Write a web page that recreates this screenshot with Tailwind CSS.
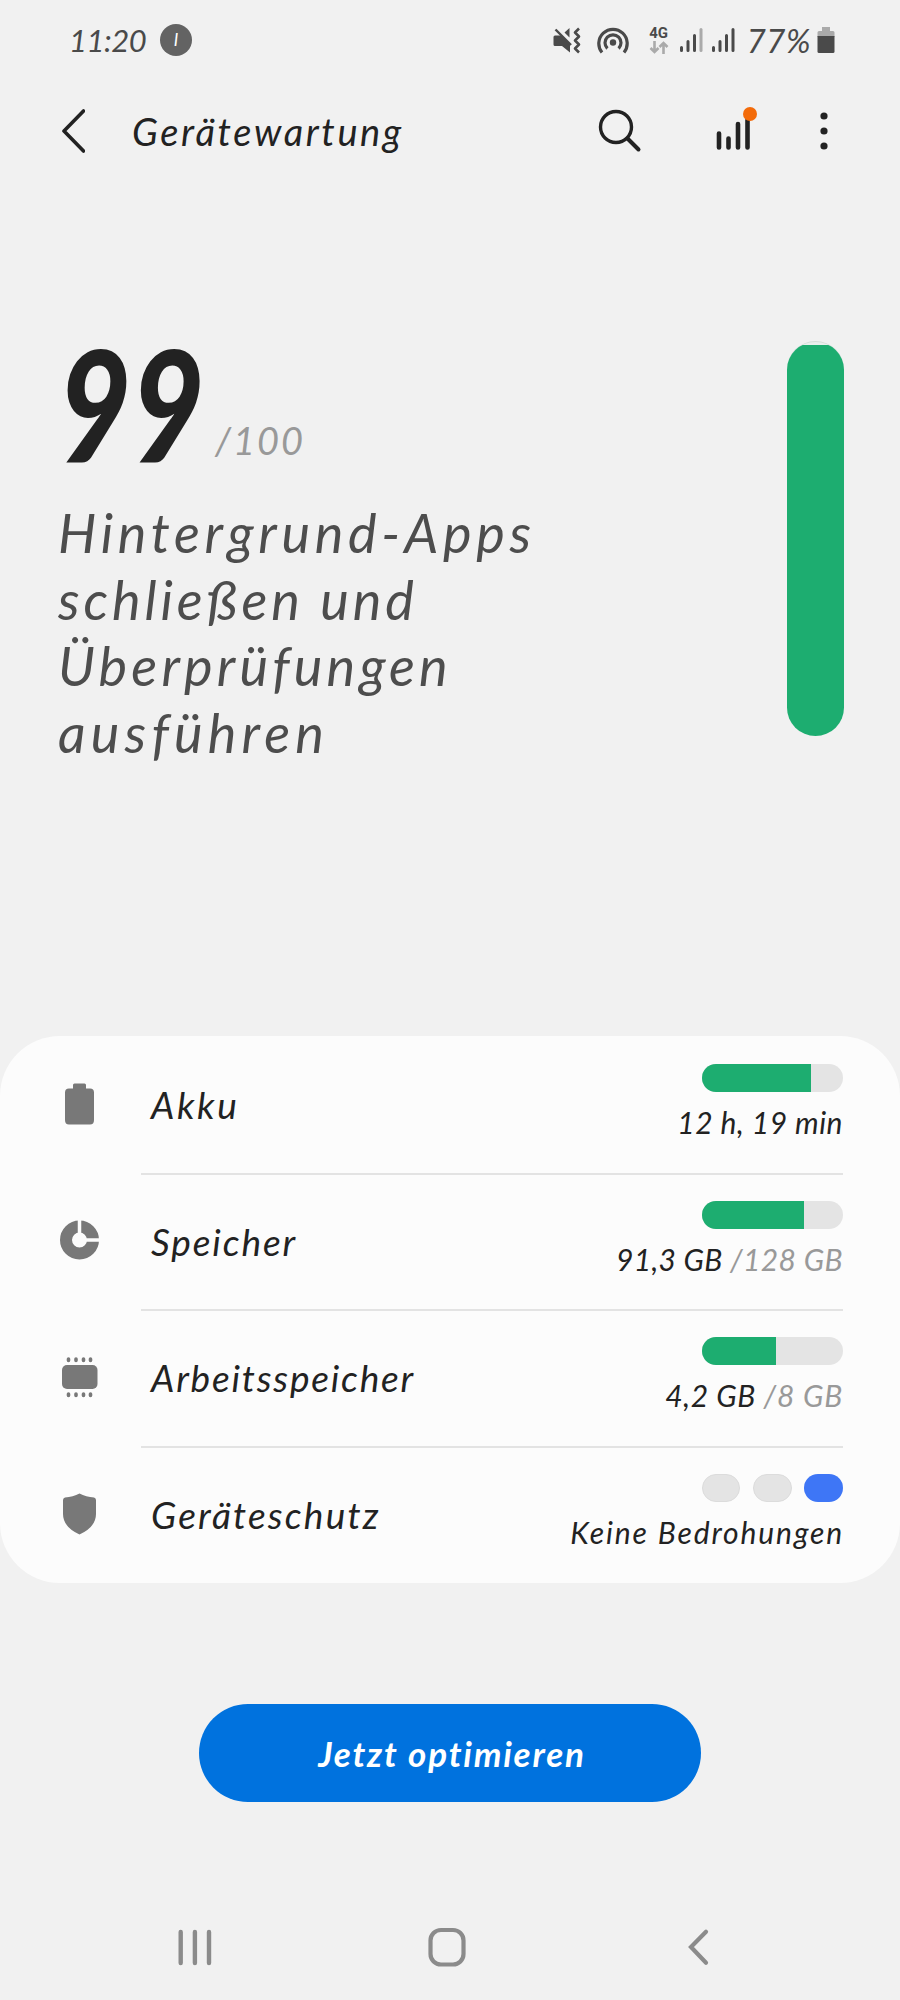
<!DOCTYPE html>
<html lang="de">
<head>
<meta charset="utf-8">
<title>Gerätewartung</title>
<script src="https://cdn.jsdelivr.net/npm/@tailwindcss/browser@4"></script>
</head>
<body class="bg-[#f1f1f1]">
<div class="flex h-[2000px] w-[900px] flex-col overflow-hidden bg-[#f1f1f1] font-[Lato,sans-serif] text-[#222] italic whitespace-nowrap">

  <!-- Status bar -->
  <header class="flex h-20 shrink-0 items-center pr-[65px] pl-[69px] text-[#4a4a4a]">
    <span class="text-[31px] leading-none tracking-[-0.5px]">11:20</span>
    <span class="ml-[14px] flex size-8 items-center justify-center rounded-full bg-[#636363] text-[17px] text-white">I</span>
    <div class="ml-auto flex items-center">
      <svg class="h-7 w-7" viewBox="0 0 28 28" fill="#4a4a4a"><path d="M2 9.500H8.500L17 17.500V26.500L9 20H2Q.500 20 .500 18.500V11Q.500 9.500 2 9.500zM11.500 6.500L16.500 2V11.500z"/><path d="M2.500 3.500L18 19" stroke="#4a4a4a" stroke-width="2.400" fill="none"/><path d="M26 2.500l-4 4 4 4-4 4 4 4-4 4 4 4" stroke="#4a4a4a" stroke-width="2.600" stroke-linejoin="round" fill="none"/></svg>
      <svg class="ml-4 h-7 w-8" viewBox="0 0 32 28" fill="none" stroke="#4a4a4a" stroke-width="3.200"><path d="M5 26.500A14.200 14.200 0 1 1 27 26.500"/><path d="M10.400 22.500A8 8 0 1 1 21.600 22.500"/><circle cx="16" cy="16.500" r="3.200" fill="#4a4a4a" stroke="none"/></svg>
      <span class="ml-5 flex w-5 flex-col items-center font-[Roboto,sans-serif] text-[15px] leading-[13px] font-bold not-italic">4G
        <svg class="mt-px h-[13px] w-5" viewBox="0 0 20 13" fill="none" stroke="#aaa" stroke-width="2.600"><path d="M5.500 0v11M1.500 7l4 4 4-4M14.500 13V2M10.500 6l4-4 4 4"/></svg></span>
      <svg class="ml-[10px] h-6 w-6" viewBox="0 0 24 24" stroke-width="3" stroke-linecap="round" stroke="#4a4a4a"><path d="M2.500 19.500v3M9 13.500v9M15.500 7.500v15"/><path d="M22 1.500v21" stroke="#aaa"/></svg>
      <svg class="ml-2 h-6 w-6" viewBox="0 0 24 24" stroke-width="3" stroke-linecap="round" stroke="#4a4a4a"><path d="M2.500 19.500v3M9 13.500v9M15.500 7.500v15M22 1.500v21"/></svg>
      <span class="ml-[12px] text-[33px] leading-none tracking-[0.5px]">77%</span>
      <svg class="ml-[6px] h-[26px] w-[18px]" viewBox="0 0 18 26"><path d="M5 0h8v4h3q1.500 0 1.500 1.500V10H.500V5.500Q.500 4 2 4h3z" fill="#aaa"/><path d="M.500 9h17v15.500Q17.500 26 16 26H2Q.500 26 .500 24.500z" fill="#4a4a4a"/></svg>
    </div>
  </header>

  <!-- App bar -->
  <nav class="flex h-[102px] shrink-0 items-center pr-[72px] pl-[61px]">
    <svg class="h-11 w-6" viewBox="0 0 24 44" fill="none" stroke="#222" stroke-width="3.600" stroke-linecap="round" stroke-linejoin="round"><path d="M22.500 2L3 22l19.500 20"/></svg>
    <h1 class="ml-[47px] text-[38px] leading-none tracking-[2.6px]">Gerätewartung</h1>
    <svg class="ml-auto h-11 w-11" viewBox="0 0 44 44" fill="none" stroke="#222" stroke-width="3.400" stroke-linecap="round"><circle cx="18" cy="18" r="15.500"/><path d="M29.500 29.500L40.500 40.500" stroke-width="4"/></svg>
    <svg class="ml-[73px] h-11 w-11 overflow-visible" viewBox="0 0 44 44" stroke="#222" stroke-width="4.600" stroke-linecap="round"><path d="M4 24.500v14M13.500 29.500v9M23 15v23.500M32.500 11v27.500"/><circle cx="35" cy="5" r="7" fill="#f36b0a" stroke="none"/></svg>
    <svg class="ml-[61px] h-11 w-2" viewBox="0 0 8 44" fill="#222"><circle cx="4" cy="7" r="3.600"/><circle cx="4" cy="22" r="3.600"/><circle cx="4" cy="37" r="3.600"/></svg>
  </nav>

  <!-- Score -->
  <section class="flex h-[854px] shrink-0 items-start justify-between pt-[159px] pr-[56px] pl-[58px]">
    <div>
      <div class="mb-[34px] flex h-[125px] items-start leading-[125px]">
        <span class="w-[157px]"><span class="inline-block origin-left scale-x-[.82] text-[154px] font-black">99</span></span>
        <span class="pt-[37px] text-[38px] tracking-[2px] text-[#999]">/100</span>
      </div>
      <p class="text-[54px] leading-[66.600px] text-[#4d4d4d]"><span class="tracking-[4.7px]">Hintergrund-Apps</span><br><span class="tracking-[3.9px]">schließen und</span><br><span class="tracking-[4.2px]">Überprüfungen</span><br><span class="tracking-[5.2px]">ausführen</span></p>
    </div>
    <div class="h-[395px] w-[57px] overflow-hidden rounded-full border-t border-[#d5ddd8] bg-[#e9efec] pt-[3px]">
      <div class="h-full bg-[#1dad70]"></div>
    </div>
  </section>

  <!-- Details -->
  <ul class="h-[547px] shrink-0 rounded-[60px] bg-[#fcfcfc] pt-[2px]">
    <li class="flex h-[136.600px]">
      <div class="flex w-[141px] items-center pb-[5px] pl-[59px]"><svg class="h-[42px] w-[42px]" viewBox="0 0 42 42" fill="#787878"><path d="M14 2q0-1.500 1.500-1.500h10Q27 .500 27 2v3.500h4q4 0 4 4V37q0 4.500-4 4.500H10q-4 0-4-4.500V9.500q0-4 4-4h4z"/></svg></div>
      <div class="mr-[57px] flex flex-1 justify-between border-b-2 border-[#e3e3e3] pl-[10px]">
        <span class="text-[37px] leading-[133px] tracking-[2.6px]">Akku</span>
        <div class="flex flex-col items-end pt-[26px]">
          <div class="h-7 w-[141px] overflow-hidden rounded-full bg-[#e4e4e4]"><div class="h-full bg-[#1dad70]" style="width:77%"></div></div>
          <span class="text-[30px] leading-[61px] tracking-[0.5px]">12 h, 19 min</span>
        </div>
      </div>
    </li>
    <li class="flex h-[136.600px]">
      <div class="flex w-[141px] items-center pb-[5px] pl-[59px]"><svg class="h-[42px] w-[42px]" viewBox="0 0 42 42"><circle cx="20.500" cy="21" r="13.500" fill="none" stroke="#787878" stroke-width="12"/><path d="M20.500 21V0M21 21h21" stroke="#fcfcfc" stroke-width="3.500"/></svg></div>
      <div class="mr-[57px] flex flex-1 justify-between border-b-2 border-[#e3e3e3] pl-[10px]">
        <span class="text-[37px] leading-[133px] tracking-[1.9px]">Speicher</span>
        <div class="flex flex-col items-end pt-[26px]">
          <div class="h-7 w-[141px] overflow-hidden rounded-full bg-[#e4e4e4]"><div class="h-full bg-[#1dad70]" style="width:72%"></div></div>
          <span class="text-[30px] leading-[61px] tracking-[0.3px]">91,3 GB <span class="tracking-[0.4px] text-[#999]">/128 GB</span></span>
        </div>
      </div>
    </li>
    <li class="flex h-[136.600px]">
      <div class="flex w-[141px] items-center pb-[5px] pl-[59px]"><svg class="h-[42px] w-[42px]" viewBox="0 0 42 42" fill="#787878"><rect x="3" y="9" width="35.500" height="24" rx="5"/><path d="M9.500 3v1.500M17 3v1.500M24.500 3v1.500M31.500 3v1.500M9.500 38v1.500M17 38v1.500M24.500 38v1.500M31.500 38v1.500" stroke="#787878" stroke-width="3.600" stroke-linecap="round"/></svg></div>
      <div class="mr-[57px] flex flex-1 justify-between border-b-2 border-[#e3e3e3] pl-[10px]">
        <span class="text-[37px] leading-[133px] tracking-[1.8px]">Arbeitsspeicher</span>
        <div class="flex flex-col items-end pt-[26px]">
          <div class="h-7 w-[141px] overflow-hidden rounded-full bg-[#e4e4e4]"><div class="h-full bg-[#1dad70]" style="width:52.500%"></div></div>
          <span class="text-[30px] leading-[61px] tracking-[0.6px]">4,2 GB <span class="tracking-[0.8px] text-[#999]">/8 GB</span></span>
        </div>
      </div>
    </li>
    <li class="flex h-[135px]">
      <div class="flex w-[141px] items-center pb-[3px] pl-[59px]"><svg class="h-[42px] w-[42px]" viewBox="0 0 42 42" fill="#787878"><path d="M20.500.500Q27 4 35 4.500q2 .500 2 2.500v14q0 13-16.500 20.500Q4 34 4 21V7q0-2 2-2.500Q14 4 20.500.500z"/></svg></div>
      <div class="mr-[57px] flex flex-1 justify-between pl-[10px]">
        <span class="text-[37px] leading-[133px] tracking-[2.2px]">Geräteschutz</span>
        <div class="flex flex-col items-end pt-[26px]">
          <div class="flex w-[141px] justify-between"><i class="h-7 w-[38px] rounded-full border border-[#dcdcdc] bg-[#e4e4e4]"></i><i class="h-7 w-[39px] rounded-full border border-[#dcdcdc] bg-[#e4e4e4]"></i><i class="h-7 w-[39px] rounded-full bg-[#3e76f6]"></i></div>
          <span class="-mr-px text-[30px] leading-[61px] tracking-[1.900px]">Keine Bedrohungen</span>
        </div>
      </div>
    </li>
  </ul>

  <button class="mx-auto mt-[121px] h-[98px] w-[502px] shrink-0 rounded-full bg-[#0072de] pl-1 text-[35px] font-bold tracking-[1.8px] text-white italic">Jetzt optimieren</button>

  <!-- System navigation -->
  <footer class="mt-[106px] flex h-[77px] shrink-0 items-center pl-[175px]">
    <svg class="h-10 w-10" viewBox="0 0 40 40" stroke="#8b8b8b" stroke-width="4.400" stroke-linecap="round"><path d="M5.700 5v31M19.900 5v31M34 5v31"/></svg>
    <svg class="ml-[212px] h-10 w-10" viewBox="0 0 40 40" fill="none" stroke="#8b8b8b" stroke-width="4.200"><rect x="3.500" y="3" width="33" height="34.500" rx="10.500"/></svg>
    <svg class="ml-[219px] h-10 w-6" viewBox="0 0 24 40" fill="none" stroke="#8b8b8b" stroke-width="4.200" stroke-linecap="round"><path d="M20 4.700L5 20l15 15.700"/></svg>
  </footer>
</div>
</body>
</html>
